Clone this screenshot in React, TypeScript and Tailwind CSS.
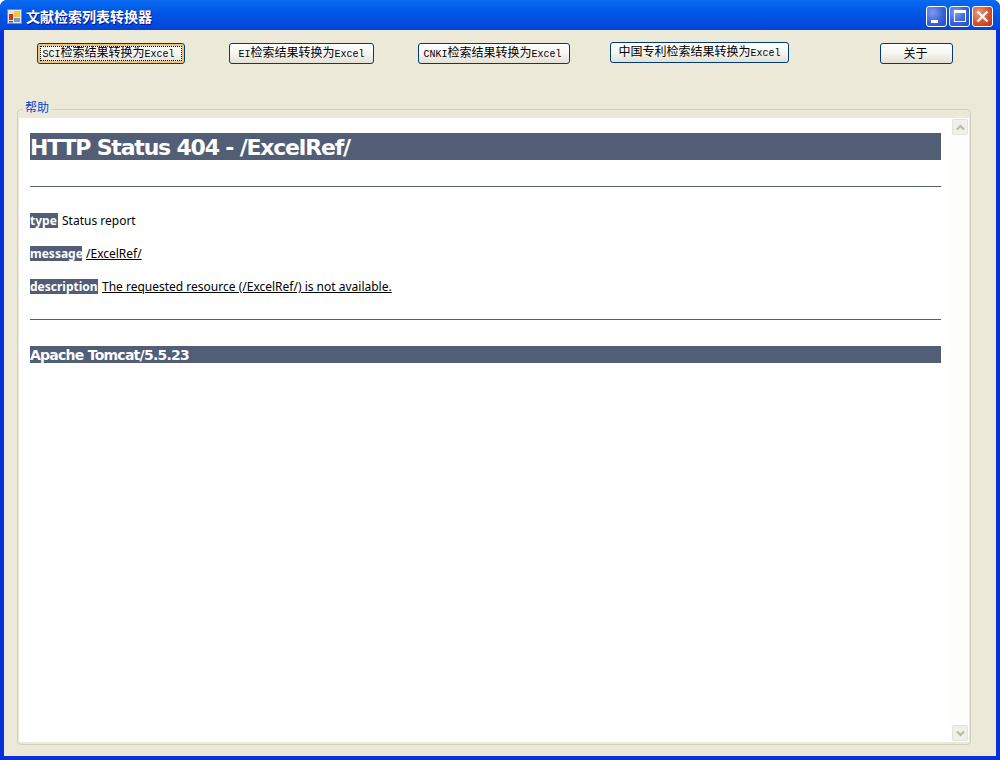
import React from "react";

const latin = "font-['Liberation_Mono',monospace] text-[10px]";

function AppButton(props: { className: string; prefix?: string; label: string; suffix?: string; focused?: boolean }) {
    return (
        <button
            className={
                "flex shrink-0 items-center justify-center rounded-[3px] border border-[#003c74] bg-gradient-to-b from-white via-[#f6f5f0] to-[#e3e0d6] text-[12px] leading-none text-black font-['Noto_Sans_CJK_SC',sans-serif] " +
                props.className +
                (props.focused ? " p-[2px] shadow-[inset_0_0_0_2px_#f3c56a]" : "")
            }
        >
            <span className={"flex items-center justify-center " + (props.focused ? "h-full w-full border border-dotted border-black pr-[5px]" : "")}>
                <span className="flex items-baseline pb-[2px]">
                    {props.prefix && <span className={latin}>{props.prefix}</span>}
                    <span>{props.label}</span>
                    {props.suffix && <span className={latin}>{props.suffix}</span>}
                </span>
            </span>
        </button>
    );
}

function CaptionButton(props: { red?: boolean; children: React.ReactNode }) {
    return (
        <div
            className={
                "flex h-[21px] w-[21px] items-center justify-center rounded-[3px] border border-white " +
                (props.red
                    ? "bg-[radial-gradient(circle_at_30%_30%,#ec9a7f,#d9512c_55%,#b8331a)]"
                    : "bg-[radial-gradient(circle_at_30%_30%,#7d9cf0,#3a62d8_55%,#2448c4)]")
            }
        >
            {props.children}
        </div>
    );
}

function ScrollArrow(props: { up?: boolean }) {
    return (
        <div className="flex h-[16px] w-[16px] items-center justify-center rounded-[2px] border border-[#e4e3dc] bg-[#f0efe8]">
            <svg width="9" height="7" viewBox="0 0 9 7">
                <path d={props.up ? "M1 5.5 L4.5 2 L8 5.5" : "M1 1.5 L4.5 5 L8 1.5"} fill="none" stroke="#b9b8ad" strokeWidth="2" />
            </svg>
        </div>
    );
}

function Field(props: { name: string; nameWidth: string; value: string; underline?: boolean }) {
    return (
        <div className="flex h-[15px] items-center whitespace-nowrap text-[12px] leading-[15px] text-black">
            <b className={"h-[15px] bg-[#525d76] text-white " + props.nameWidth}>{props.name}</b>
            <span className={"ml-[4px] " + (props.underline ? "underline" : "")}>{props.value}</span>
        </div>
    );
}

export default function App() {
    return (
        <div className="flex h-[760px] w-[1000px] flex-col overflow-hidden rounded-t-[7px] bg-[#0831d9] font-['Noto_Sans',sans-serif]">
            <div className="flex h-[30px] shrink-0 items-center bg-gradient-to-b from-[#0a6af0] via-[#0053e4] to-[#0146d8] pl-[7px] pr-[7px] pt-[2px]">
                <svg width="15" height="15" viewBox="0 0 15 15" className="shrink-0">
                    <rect x="0.5" y="0.5" width="14" height="14" fill="#e8e4d8" stroke="#7a8aa8" />
                    <rect x="2" y="5" width="4" height="6" fill="#c8342c" />
                    <rect x="7" y="2" width="6" height="6" fill="#f5c63c" />
                    <rect x="7" y="9" width="6" height="4" fill="#6a9ad8" />
                    <rect x="2" y="12" width="4" height="1.5" fill="#3a62a8" />
                </svg>
                <span className="ml-[4px] text-[14px] font-bold leading-none text-white [text-shadow:1px_1px_0_#0f1089] font-['Noto_Sans_CJK_SC',sans-serif]">
                    文献检索列表转换器
                </span>
                <div className="ml-auto flex gap-[2px]">
                    <CaptionButton>
                        <div className="mt-[10px] mr-[5px] h-[3px] w-[7px] bg-white" />
                    </CaptionButton>
                    <CaptionButton>
                        <div className="h-[12px] w-[12px] border border-t-[3px] border-white" />
                    </CaptionButton>
                    <CaptionButton red>
                        <svg width="13" height="13" viewBox="0 0 13 13">
                            <path d="M1.5 1.5 L11.5 11.5 M11.5 1.5 L1.5 11.5" stroke="white" strokeWidth="2.4" />
                        </svg>
                    </CaptionButton>
                </div>
            </div>

            <div className="mx-[4px] mb-[4px] flex-1 bg-[#ece9d8]">
                <div className="flex h-[79px] items-start pl-[33px]">
                    <AppButton className="mt-[13px] h-[21px] w-[148px]" prefix="SCI" label="检索结果转换为" suffix="Excel" focused />
                    <AppButton className="mt-[13px] ml-[44px] h-[21px] w-[145px]" prefix="EI" label="检索结果转换为" suffix="Excel" />
                    <AppButton className="mt-[13px] ml-[44px] h-[21px] w-[152px] pr-[3px]" prefix="CNKI" label="检索结果转换为" suffix="Excel" />
                    <AppButton className="mt-[12px] ml-[40px] h-[21px] w-[179px]" label="中国专利检索结果转换为" suffix="Excel" />
                    <AppButton className="mt-[13px] ml-[91px] h-[21px] w-[73px] pr-[2px]" label="关于" />
                </div>

                <div className="relative ml-[13px] flex h-[636px] w-[954px] rounded-[4px] border border-[#d0d0bf] pl-[1px] pr-[1px] pb-[2px] pt-[8px]">
                    <span className="absolute left-[5px] top-[-11px] bg-[#ece9d8] px-[2px] text-[12px] leading-[16px] text-[#0046d5] font-['Noto_Sans_CJK_SC',sans-serif]">
                        帮助
                    </span>
                    <div className="flex-1 bg-white pl-[11px] pr-[10px] pt-[15px]">
                        <h1 className="h-[27px] bg-[#525d76] text-[22px] font-bold leading-[29px] tracking-[-1.2px] text-white font-['DejaVu_Sans',sans-serif]">HTTP Status 404 - /ExcelRef/</h1>
                        <div className="mt-[26px] h-px bg-[#525d76]" />
                        <div className="mt-[26px] flex flex-col gap-[18px]">
                            <Field name="type" nameWidth="w-[28px]" value="Status report" />
                            <Field name="message" nameWidth="w-[52px]" value="/ExcelRef/" underline />
                            <Field name="description" nameWidth="w-[68px]" value="The requested resource (/ExcelRef/) is not available." underline />
                        </div>
                        <div className="mt-[25px] h-px bg-[#525d76]" />
                        <h3 className="mt-[26px] h-[17px] bg-[#525d76] text-[14px] font-bold leading-[19px] tracking-[-0.75px] text-white font-['DejaVu_Sans',sans-serif]">Apache Tomcat/5.5.23</h3>
                    </div>
                    <div className="flex w-[18px] flex-col justify-between bg-[#fdfdfb] px-px py-px">
                        <ScrollArrow up />
                        <ScrollArrow />
                    </div>
                </div>
            </div>
        </div>
    );
}
